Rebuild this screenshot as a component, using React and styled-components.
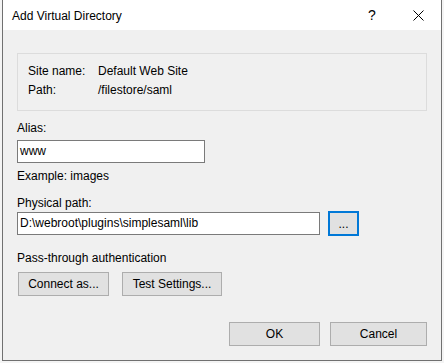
import React from "react";
import styled, { createGlobalStyle } from "styled-components";

/**
 * Global page reset
 */
const GlobalStyle = createGlobalStyle`
  html, body {
    margin: 0;
    padding: 0;
    background: #f4f4f4;
  }
  body {
    font-family: "Liberation Sans", Arial, sans-serif;
    font-size: 12px;
    color: #000;
  }
`;

/** dialog frame */
const Window = styled.div`
  margin-left: 2px;
  width: 440px;
  height: 361px;
  box-sizing: border-box;
  border: 1px solid #707070;
  border-top: none;
  background: #f0f0f0;
  display: flex;
  flex-direction: column;
`;

const TitleBar = styled.div`
  height: 30px;
  background: #fff;
  display: flex;
  align-items: center;
  padding-left: 9px;
`;

const Title = styled.div`
  flex: 1;
  font-size: 12px;
  line-height: 16px;
  padding-top: 1px;
`;

const CaptionButton = styled.div`
  width: 46px;
  height: 30px;
  display: flex;
  align-items: center;
  justify-content: center;
  font-size: 14px;
`;

const Body = styled.div`
  padding: 23px 14px 0 14px;
  display: flex;
  flex-direction: column;
`;

/** site info box */
const InfoGroup = styled.div`
  height: 58px;
  box-sizing: border-box;
  border: 1px solid #dcdcdc;
  padding: 8px 0 0 10px;
  display: grid;
  grid-template-columns: 70px 1fr;
  grid-auto-rows: 19px;
  line-height: 19px;
`;

const FieldLabel = styled.div`
  line-height: 16px;
  margin-top: ${p => p.top || 0}px;
  margin-bottom: ${p => p.bottom || 0}px;
`;

const TextBox = styled.div`
  width: ${p => p.width}px;
  height: 23px;
  box-sizing: border-box;
  border: 1px solid #7a7a7a;
  background: #fff;
  padding-left: 2px;
  line-height: 21px;
  white-space: nowrap;
  overflow: hidden;
`;

const PathRow = styled.div`
  display: flex;
  align-items: center;
  gap: 8px;
  height: 25px;
`;

const BrowseButton = styled.div`
  width: 31px;
  height: 25px;
  box-sizing: border-box;
  border: 2px solid #0078d7;
  background: #e1e1e1;
  display: flex;
  align-items: center;
  justify-content: center;
  line-height: 16px;
`;

const ButtonRow = styled.div`
  display: flex;
  gap: ${p => p.gap || 13}px;
  justify-content: ${p => (p.end ? "flex-end" : "flex-start")};
  margin-top: ${p => p.top || 0}px;
  padding-left: ${p => (p.end ? 0 : 1)}px;
`;

const Button = styled.div`
  width: ${p => p.width}px;
  height: 24px;
  box-sizing: border-box;
  border: 1px solid #adadad;
  background: #e1e1e1;
  display: flex;
  align-items: center;
  justify-content: center;
  line-height: 16px;
`;

const CloseIcon = () => (
  <svg width="11" height="11" viewBox="0 0 11 11">
    <path d="M0.5 0.5L10.5 10.5M10.5 0.5L0.5 10.5" stroke="#000" strokeWidth="1" fill="none" />
  </svg>
);

export default function App() {
  return (
    <>
      <GlobalStyle />
      <Window>
        <TitleBar>
          <Title>Add Virtual Directory</Title>
          <CaptionButton>?</CaptionButton>
          <CaptionButton>
            <CloseIcon />
          </CaptionButton>
        </TitleBar>
        <Body>
          <InfoGroup>
            <span>Site name:</span>
            <span>Default Web Site</span>
            <span>Path:</span>
            <span>/filestore/saml</span>
          </InfoGroup>

          <FieldLabel top={9} bottom={4}>Alias:</FieldLabel>
          <TextBox width={188}>www</TextBox>
          <FieldLabel top={5}>Example: images</FieldLabel>

          <FieldLabel top={11}>Physical path:</FieldLabel>
          <PathRow>
            <TextBox width={303}>D:\webroot\plugins\simplesaml\lib</TextBox>
            <BrowseButton>...</BrowseButton>
          </PathRow>

          <FieldLabel top={14}>Pass-through authentication</FieldLabel>
          <ButtonRow top={6}>
            <Button width={91}>Connect as...</Button>
            <Button width={100}>Test Settings...</Button>
          </ButtonRow>

          <ButtonRow end gap={10} top={26}>
            <Button width={91}>OK</Button>
            <Button width={97}>Cancel</Button>
          </ButtonRow>
        </Body>
      </Window>
    </>
  );
}
